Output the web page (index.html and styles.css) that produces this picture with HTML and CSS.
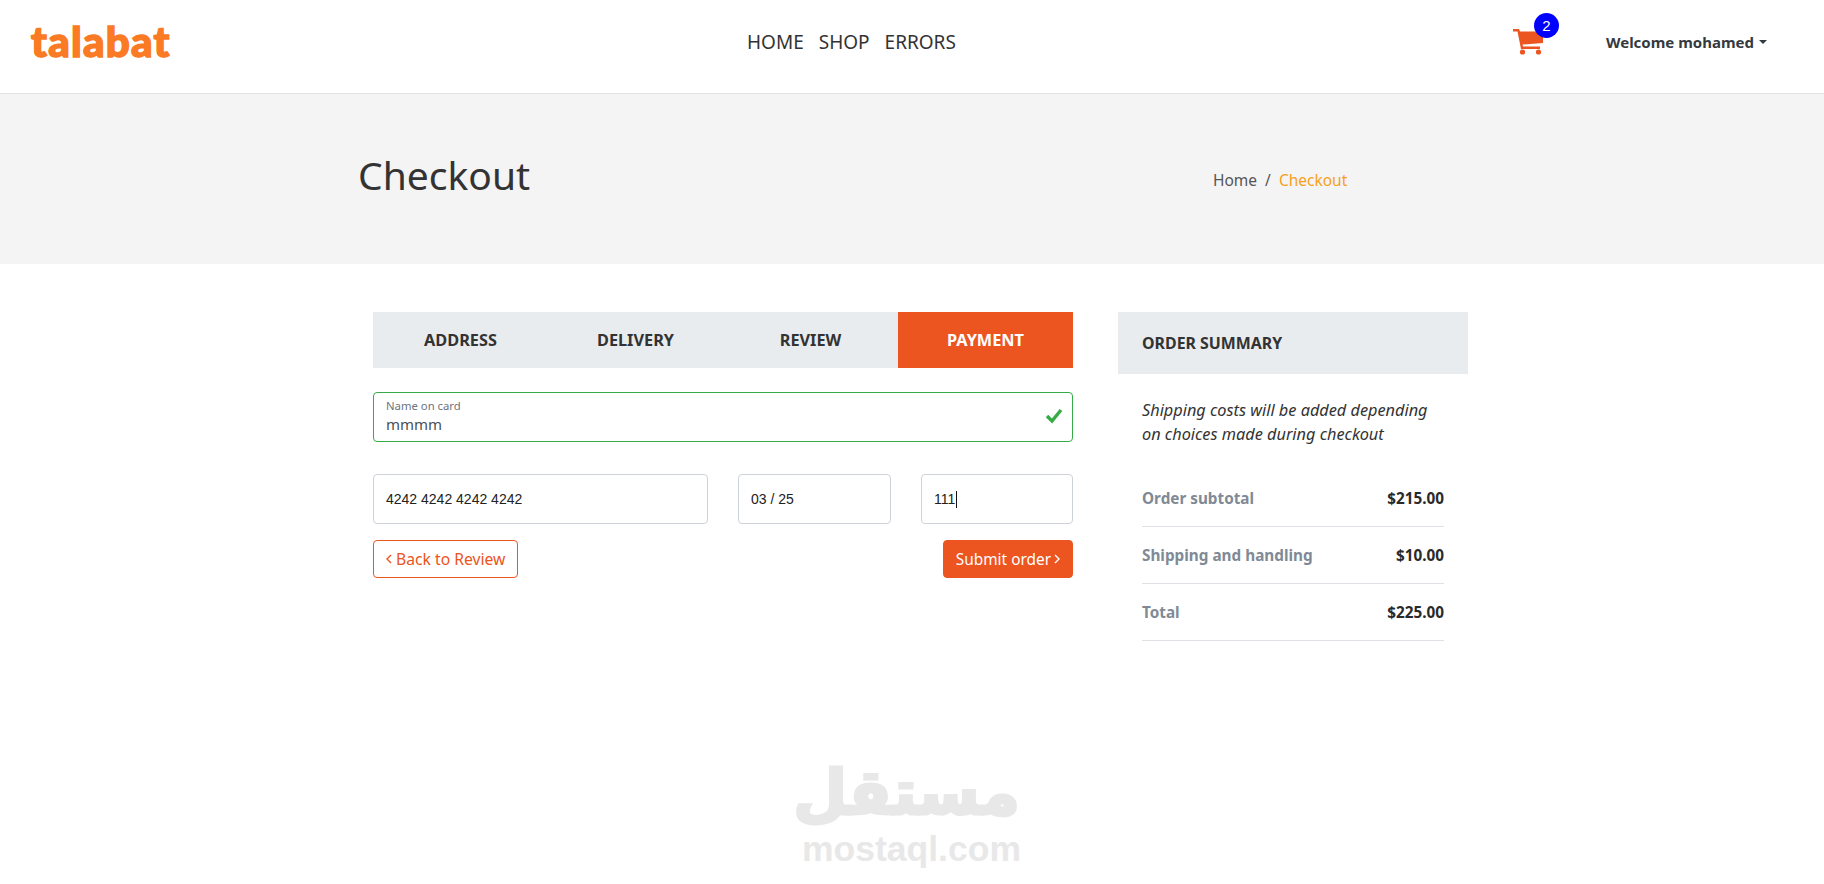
FILE: index.html
```html
<!DOCTYPE html>
<html lang="en">
<head>
<meta charset="utf-8">
<title>Checkout</title>
<link rel="stylesheet" href="styles.css">
</head>
<body>
<header class="topbar">
  <a class="logo" href="#">talabat</a>
  <nav class="nav">
    <a href="#">HOME</a>
    <a href="#">SHOP</a>
    <a href="#">ERRORS</a>
  </nav>
  <div class="user">
    <a class="cart" href="#">
      <svg class="cart-icon" viewBox="0 0 30 26"><path d="M0 0H6L7 2.5H30V14L9.5 15.5L10 17.5H27V20H8L4.5 2.5H0Z"/><circle cx="9.5" cy="23" r="2.6"/><circle cx="25.5" cy="23" r="2.6"/></svg>
      <span class="badge">2</span>
    </a>
    <a class="welcome" href="#">Welcome mohamed<span class="caret-down"></span></a>
  </div>
</header>

<section class="hero">
  <h1>Checkout</h1>
  <ol class="crumbs">
    <li><a href="#">Home</a></li>
    <li class="sep">/</li>
    <li class="current">Checkout</li>
  </ol>
</section>

<main class="content">
  <div class="checkout">
    <div class="tabs">
      <a href="#">ADDRESS</a>
      <a href="#">DELIVERY</a>
      <a href="#">REVIEW</a>
      <a class="active" href="#">PAYMENT</a>
    </div>
    <div class="floating valid">
      <label for="cardname">Name on card</label>
      <input id="cardname" type="text" value="mmmm">
      <svg class="check" viewBox="0 0 18 16"><polyline points="2,8 7,13 16,2"/></svg>
    </div>
    <div class="card-row">
      <div class="stripe number">4242 4242 4242 4242</div>
      <div class="stripe expiry">03 / 25</div>
      <div class="stripe cvc">111<span class="text-caret"></span></div>
    </div>
    <div class="actions">
      <a class="btn outline" href="#"><svg class="chev" viewBox="0 0 6 10"><polyline points="5,1 1,5 5,9"/></svg>Back to Review</a>
      <a class="btn solid" href="#">Submit order<svg class="chev" viewBox="0 0 6 10"><polyline points="1,1 5,5 1,9"/></svg></a>
    </div>
  </div>

  <aside class="summary">
    <h2>ORDER SUMMARY</h2>
    <div class="summary-body">
      <p class="note">Shipping costs will be added depending on choices made during checkout</p>
      <ul class="totals">
        <li><strong>Order subtotal</strong><b>$215.00</b></li>
        <li><strong>Shipping and handling</strong><b>$10.00</b></li>
        <li><strong>Total</strong><b>$225.00</b></li>
      </ul>
    </div>
  </aside>
</main>

<footer class="watermark">
  <div class="wm-ar" lang="ar" dir="rtl">مستقل</div>
  <div class="wm-en">mostaql.com</div>
</footer>
</body>
</html>
```
FILE: styles.css
```css
* { box-sizing: border-box; }
html, body { margin: 0; padding: 0; }
body {
  height: 884px;
  overflow: hidden;
  background: #fff;
  color: #333;
  font-family: "Noto Sans", "Open Sans", sans-serif;
  font-size: 16px;
}
a { color: inherit; text-decoration: none; }

.topbar {
  height: 94px;
  border-bottom: 1px solid #e2e2e2;
  display: grid;
  grid-template-columns: 716px auto 1fr;
  align-items: center;
  padding: 0 57px 10px 31px;
}
.logo {
  font-family: Lato, sans-serif;
  font-weight: 900;
  font-size: 42px;
  line-height: 1;
  margin-top: -2px;
  color: #fb7a24;
  -webkit-text-stroke: 1.5px #fb7a24;
  letter-spacing: 1.3px;
}
.nav { display: flex; gap: 15px; font-size: 19px; color: #333; }
.user { display: flex; justify-content: flex-end; align-items: center; gap: 63px; }
.cart { position: relative; display: block; height: 26px; }
.cart-icon { display: block; width: 30px; height: 26px; fill: #ec5420; }
.badge {
  position: absolute;
  left: 21px;
  top: -16px;
  width: 25px;
  height: 25px;
  border-radius: 50%;
  background: #00f;
  color: #fff;
  font: 15px/25px "Liberation Sans", sans-serif;
  text-align: center;
}
.welcome { font-size: 15px; font-weight: 700; color: #343a40; display: flex; align-items: center; }
.caret-down {
  margin-left: 5px;
  border-top: 4px solid #343a40;
  border-left: 4px solid transparent;
  border-right: 4px solid transparent;
}

.hero {
  height: 170px;
  background: #f4f4f4;
  display: flex;
  align-items: center;
  padding: 0 0 0 358px;
}
.hero h1 {
  margin: 0 0 7px;
  width: 855px;
  font-size: 39px;
  font-weight: 400;
  line-height: 1.2;
  color: #333;
}
.crumbs {
  list-style: none;
  margin: 2px 0 0;
  padding: 0;
  display: flex;
  gap: 8px;
  font-size: 15.5px;
  color: #555;
}
.crumbs .current { color: #f7a01d; }

.content {
  display: flex;
  align-items: flex-start;
  gap: 45px;
  padding: 48px 0 0 373px;
}
.checkout { width: 700px; }
.tabs {
  display: grid;
  grid-template-columns: repeat(4, 1fr);
  height: 56px;
  background: #e9ecef;
  margin-bottom: 24px;
}
.tabs a {
  display: flex;
  align-items: center;
  justify-content: center;
  font-size: 16.3px;
  font-weight: 700;
  color: #333;
}
.tabs a.active { background: #ec5420; color: #fff; }

.floating {
  position: relative;
  height: 50px;
  border: 1px solid #35ac47;
  border-radius: 4px;
  margin-bottom: 32px;
  padding: 6px 12px 0;
}
.floating label { display: block; font-size: 11.3px; line-height: 14px; color: #6c757d; }
.floating input {
  display: block;
  width: 100%;
  border: 0;
  padding: 0;
  margin: 0;
  outline: 0;
  background: none;
  font: 15px/22px "Noto Sans", sans-serif;
  color: #495057;
}
.check {
  position: absolute;
  right: 9px;
  top: 15px;
  width: 18px;
  height: 16px;
  fill: none;
  stroke: #35ac47;
  stroke-width: 3.4;
}

.card-row {
  display: grid;
  grid-template-columns: 335px 153px 152px;
  gap: 30px;
  margin-bottom: 16px;
}
.stripe {
  height: 50px;
  border: 1px solid #ced2da;
  border-radius: 4px;
  padding: 0 12px;
  display: flex;
  align-items: center;
  font: 14px "Liberation Sans", sans-serif;
  color: #222;
}
.text-caret { display: inline-block; width: 1px; height: 17px; background: #111; margin-left: 1px; }

.actions { display: flex; justify-content: space-between; }
.btn {
  display: flex;
  align-items: center;
  gap: 4px;
  height: 38px;
  padding: 0 12px;
  border-radius: 4px;
  border: 1px solid #ec5420;
  font-size: 15.7px;
  white-space: nowrap;
}
.chev { width: 6px; height: 10px; fill: none; stroke: currentColor; stroke-width: 1.4; }
.btn.outline { color: #ec5420; background: #fff; }
.btn.solid { color: #fff; background: #ec5420; font-size: 15.4px; gap: 3px; }

.summary { width: 350px; }
.summary h2 {
  margin: 0;
  height: 62px;
  background: #e9ecef;
  padding: 0 24px;
  display: flex;
  align-items: center;
  font-size: 15.9px;
  font-weight: 700;
  color: #333;
}
.summary-body { padding: 24px 24px 0; }
.note {
  margin: 0 0 24px;
  font-size: 16.3px;
  line-height: 24px;
  font-style: italic;
  color: #333;
}
.totals { list-style: none; margin: 0; padding: 0; }
.totals li {
  height: 57px;
  display: flex;
  align-items: center;
  justify-content: space-between;
  border-bottom: 1px solid #dee2e6;
  font-size: 15.3px;
}
.totals strong { color: #7f8a96; font-weight: 700; }
.totals b { color: #2a2a2a; font-weight: 700; }

.watermark {
  position: absolute;
  left: 802px;
  top: 752px;
  width: 218px;
  text-align: center;
  color: #e8e8e8;
}
.wm-ar { font: 700 62px/82px "DejaVu Sans", sans-serif; -webkit-text-stroke: 3px #e8e8e8; }
.wm-en { font: 700 35.5px/30px "Liberation Sans", sans-serif; }
```
